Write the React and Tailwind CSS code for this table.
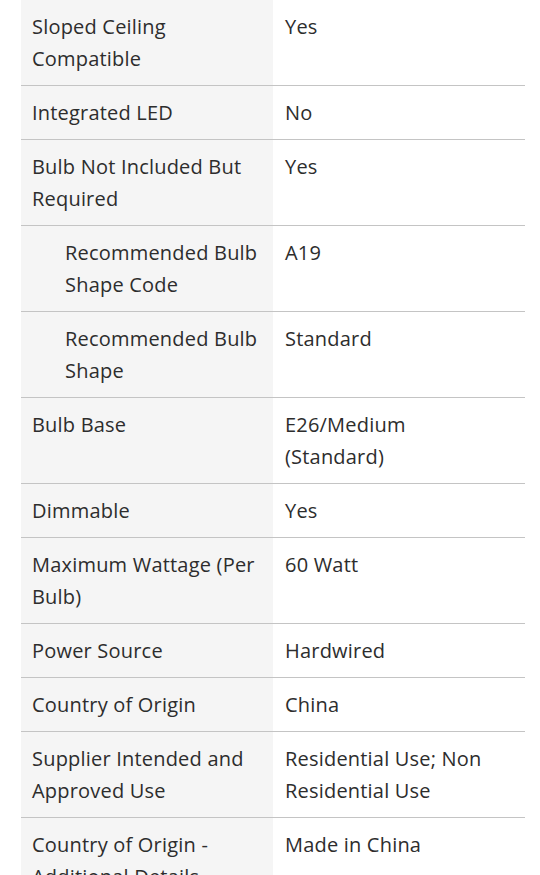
import React from 'react';

const specs = [
  { label: ['Sloped Ceiling', 'Compatible'], value: ['Yes'] },
  { label: ['Integrated LED'], value: ['No'] },
  { label: ['Bulb Not Included But', 'Required'], value: ['Yes'] },
  { label: ['Recommended Bulb', 'Shape Code'], value: ['A19'], sub: true },
  { label: ['Recommended Bulb', 'Shape'], value: ['Standard'], sub: true },
  { label: ['Bulb Base'], value: ['E26/Medium', '(Standard)'] },
  { label: ['Dimmable'], value: ['Yes'] },
  { label: ['Maximum Wattage (Per', 'Bulb)'], value: ['60 Watt'] },
  { label: ['Power Source'], value: ['Hardwired'] },
  { label: ['Country of Origin'], value: ['China'] },
  { label: ['Supplier Intended and', 'Approved Use'], value: ['Residential Use; Non', 'Residential Use'] },
  { label: ['Country of Origin -', 'Additional Details'], value: ['Made in China'] },
];

const Lines = ({ lines }) => (
  <>
    {lines.map((line, i) => (
      <div key={i} className="whitespace-nowrap">{line}</div>
    ))}
  </>
);

export default function App() {
  return (
    <div
      className="h-[875px] overflow-hidden bg-white text-[#2d2d2d]"
      style={{ fontFamily: '"Open Sans", Lato, sans-serif' }}
    >
      <div className="ml-[21px] w-[504px] text-[20px] leading-[32px] tracking-[0.2px]">
        {specs.map((row, i) => (
          <div key={i} className="flex border-b border-[#c4c4c4]">
            <div className={`w-[252px] shrink-0 bg-[#f5f5f5] pt-[11px] pb-[10px] pr-1 ${row.sub ? 'pl-[44px]' : 'pl-[11px]'}`}>
              <Lines lines={row.label} />
            </div>
            <div className="flex-1 pt-[11px] pb-[10px] pl-3 pr-3">
              <Lines lines={row.value} />
            </div>
          </div>
        ))}
      </div>
    </div>
  );
}
